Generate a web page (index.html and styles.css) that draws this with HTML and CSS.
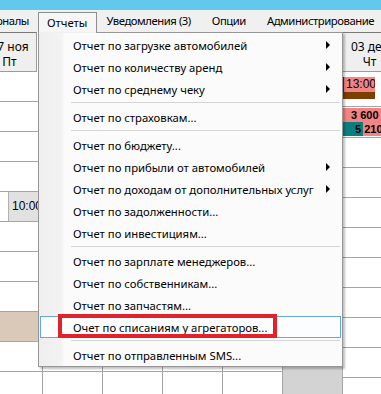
FILE: index.html
```html
<!DOCTYPE html>
<html lang="ru">
<head>
    <meta charset="UTF-8">
    <title>Отчеты</title>
    <link rel="stylesheet" href="styles.css">
</head>
<body>
    <div class="titlebar"></div>

    <nav class="menubar">
        <div class="menubar-item cut"><span>Журналы</span></div>
        <div class="menubar-item open">Отчеты</div>
        <div class="menubar-item">Уведомления (3)</div>
        <div class="menubar-item">Опции</div>
        <div class="menubar-item">Администрирование</div>
    </nav>

    <div class="calendar">
        <div class="day">
            <div class="day-head">17 ноя<br>Пт</div>
            <div class="slot"></div>
            <div class="slot"></div>
            <div class="slot"></div>
            <div class="slot"></div>
            <div class="slot"><div class="ev ev-gray">10:00</div></div>
            <div class="slot"></div>
            <div class="slot"></div>
            <div class="slot"></div>
            <div class="slot"><div class="ev ev-beige"></div></div>
            <div class="slot"></div>
            <div class="slot"></div>
        </div>
        <div class="day">
            <div class="day-head">18 ноя<br>Сб</div>
            <div class="slot"></div><div class="slot"></div><div class="slot"></div><div class="slot"></div>
            <div class="slot"></div><div class="slot"></div><div class="slot"></div><div class="slot"></div>
            <div class="slot"></div><div class="slot"></div><div class="slot"></div>
        </div>
        <div class="day">
            <div class="day-head">19 ноя<br>Вс</div>
            <div class="slot"></div><div class="slot"></div><div class="slot"></div><div class="slot"></div>
            <div class="slot"></div><div class="slot"></div><div class="slot"></div><div class="slot"></div>
            <div class="slot"></div><div class="slot"></div><div class="slot"></div>
        </div>
        <div class="day">
            <div class="day-head">20 ноя<br>Пн</div>
            <div class="slot"></div><div class="slot"></div><div class="slot"></div><div class="slot"></div>
            <div class="slot"></div><div class="slot"></div><div class="slot"></div><div class="slot"></div>
            <div class="slot"></div><div class="slot"></div><div class="slot"></div>
        </div>
        <div class="day">
            <div class="day-head">21 ноя<br>Вт</div>
            <div class="slot"></div><div class="slot"></div><div class="slot"></div><div class="slot"></div>
            <div class="slot"></div><div class="slot"></div><div class="slot"></div><div class="slot"></div>
            <div class="slot"></div><div class="slot"></div><div class="slot"></div>
        </div>
        <div class="day">
            <div class="day-head">22 ноя<br>Ср</div>
            <div class="slot"></div><div class="slot"></div><div class="slot"></div><div class="slot"></div>
            <div class="slot"></div><div class="slot"></div><div class="slot"></div><div class="slot"></div>
            <div class="slot"></div><div class="slot busy"></div><div class="slot busy"></div>
        </div>
        <div class="day">
            <div class="day-head">03 дек<br>Чт</div>
            <div class="slot">
                <div class="ev ev-red ev-time">13:00</div>
                <div class="ev ev-brown"></div>
            </div>
            <div class="slot">
                <div class="ev ev-red ev-sum">3 600</div>
                <div class="ev ev-split ev-sum">5 210</div>
            </div>
            <div class="slot"></div><div class="slot"></div><div class="slot"></div><div class="slot"></div>
            <div class="slot"></div><div class="slot"></div><div class="slot"></div><div class="slot"></div>
            <div class="slot"></div>
        </div>
    </div>

    <div class="dropdown">
        <div class="item sub">Отчет по загрузке автомобилей</div>
        <div class="item sub">Отчет по количеству аренд</div>
        <div class="item sub">Отчет по среднему чеку</div>
        <div class="sep"></div>
        <div class="item">Отчет по страховкам...</div>
        <div class="sep"></div>
        <div class="item">Отчет по бюджету...</div>
        <div class="item sub">Отчет по прибыли от автомобилей</div>
        <div class="item sub">Отчет по доходам от дополнительных услуг</div>
        <div class="item">Отчет по задолженности...</div>
        <div class="item">Отчет по инвестициям...</div>
        <div class="sep"></div>
        <div class="item">Отчет по зарплате менеджеров...</div>
        <div class="item">Отчет по собственникам...</div>
        <div class="item">Отчет по запчастям...</div>
        <div class="item hover">Очет по списаниям у агрегаторов...</div>
        <div class="sep"></div>
        <div class="item">Отчет по отправленным SMS...</div>
    </div>

    <div class="annotation"></div>
</body>
</html>
```

FILE: styles.css
```css
body {
    margin: 0;
    width: 381px;
    height: 394px;
    overflow: hidden;
    position: relative;
    background-color: white;
    font-family: "Noto Sans", "Open Sans", sans-serif;
    font-size: 11.3px;
    color: #000;
}

.titlebar {
    height: 10px;
    background-color: #62c8ec;
}

/* menu bar */
.menubar {
    display: flex;
    height: 22px;
    overflow: hidden;
    background-color: #f0f0f0;
}

.menubar-item {
    flex-shrink: 0;
    padding: 0 9px;
    line-height: 22px;
    letter-spacing: -0.45px;
    white-space: nowrap;
}

.menubar-item + .menubar-item {
    margin-left: 3px;
}

.menubar-item.cut {
    width: 29px;
    padding: 0 9px 0 0;
    display: flex;
    justify-content: flex-end;
    overflow: hidden;
}

.menubar-item.open {
    margin-left: 0;
    margin-top: 2px;
    line-height: 19px;
    letter-spacing: 0;
    border: 1px solid #8e8f8f;
    border-bottom: none;
    background-color: #f6f6f6;
    padding: 0 9px 0 8px;
}

.menubar-item.open + .menubar-item {
    margin-left: 0;
}

/* calendar */
.calendar {
    display: flex;
    margin-left: -17px;
}

.day {
    width: 60px;
    flex-shrink: 0;
}

.day-head {
    width: 54px;
    height: 40px;
    box-sizing: border-box;
    padding-top: 6px;
    line-height: 15px;
    font-size: 12px;
    text-align: center;
    background-color: #efefef;
    border-top: 1px solid #7a7a7a;
    border-bottom: 1px solid #9c9c9c;
    border-right: 1px solid #9c9c9c;
    margin-right: 6px;
}

.slot {
    height: 30px;
    box-sizing: border-box;
    border-bottom: 1px solid #a5a5a5;
    border-right: 1px solid #a5a5a5;
}

.slot.busy {
    background-color: #d3d3d3;
    border-bottom-color: #d3d3d3;
}

.ev {
    font-family: "Liberation Sans", Arial, sans-serif;
    font-size: 12px;
    white-space: nowrap;
    overflow: hidden;
}

.ev-gray {
    height: 29px;
    margin-left: 25px;
    padding-left: 3px;
    line-height: 29px;
    background-color: #e1e1e1;
    border-left: 1px solid #b0b0b0;
}

.ev-beige {
    height: 29px;
    background-color: #dac8b8;
}

.ev-red {
    background-color: #f48484;
}

.ev-time {
    width: 32px;
    height: 15px;
    margin-top: 5px;
    line-height: 15px;
    padding-left: 2px;
    box-sizing: border-box;
    border-left: 1px solid #5a2a00;
}

.ev-brown {
    width: 32px;
    height: 7px;
    background-color: #7b3f00;
}

.ev-sum {
    height: 14px;
    line-height: 14px;
    font-size: 11px;
    font-weight: bold;
}

.ev-red.ev-sum {
    margin-top: 1px;
    padding-left: 8px;
}

.ev-split {
    padding-left: 12px;
    background: linear-gradient(to right, #0b7f80 20px, #f48484 20px);
}

/* dropdown menu */
.dropdown {
    position: absolute;
    top: 32px;
    left: 38px;
    width: 305px;
    height: 335px;
    box-sizing: border-box;
    padding: 1px;
    border: 1px solid #979797;
    background: linear-gradient(to right, #eeeeee 0, #f3f3f3 22px, #fbfbfb 26px);
    box-shadow: 2px 2px 2px rgba(0, 0, 0, 0.25);
}

.dropdown::before {
    content: "";
    position: absolute;
    top: -1px;
    left: 0;
    width: 57px;
    height: 1px;
    background-color: #f0f0f0;
}

.item {
    display: flex;
    justify-content: space-between;
    align-items: center;
    height: 22px;
    box-sizing: border-box;
    padding: 0 10px 0 32px;
    border: 1px solid transparent;
    white-space: nowrap;
}

.item.sub::after {
    content: "";
    border-left: 4px solid #000;
    border-top: 4px solid transparent;
    border-bottom: 4px solid transparent;
}

.item.hover {
    border-color: #66a8dc;
    background-color: #fcfdff;
}

.sep {
    height: 1px;
    margin: 2px 1px 3px 31px;
    background-color: #d5d5d5;
}

.annotation {
    position: absolute;
    left: 58px;
    top: 314px;
    width: 219px;
    height: 24px;
    box-sizing: border-box;
    border: 4px solid #e1222b;
}
```
